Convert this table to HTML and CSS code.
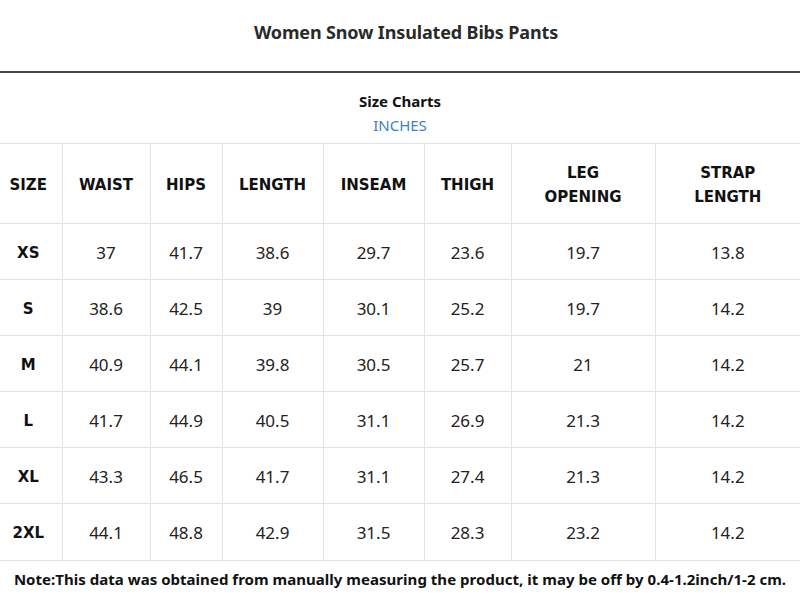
FILE: index.html
```html
<!DOCTYPE html>
<html>
<head>
<meta charset="utf-8">
<link rel="stylesheet" href="styles.css">
</head>
<body>
<header class="top">
  <h1 class="title">Women Snow Insulated Bibs Pants</h1>
</header>
<section class="chart">
  <div class="chart-head">
    <div class="chart-name">Size Charts</div>
    <div class="chart-unit">INCHES</div>
  </div>
  <table class="sizes">
    <colgroup>
      <col class="c1"><col class="c2"><col class="c3"><col class="c4"><col class="c5"><col class="c6"><col class="c7"><col class="c8">
    </colgroup>
    <thead>
      <tr><th>SIZE</th><th>WAIST</th><th>HIPS</th><th>LENGTH</th><th>INSEAM</th><th>THIGH</th><th>LEG<br>OPENING</th><th>STRAP<br>LENGTH</th></tr>
    </thead>
    <tbody>
      <tr><th>XS</th><td>37</td><td>41.7</td><td>38.6</td><td>29.7</td><td>23.6</td><td>19.7</td><td>13.8</td></tr>
      <tr><th>S</th><td>38.6</td><td>42.5</td><td>39</td><td>30.1</td><td>25.2</td><td>19.7</td><td>14.2</td></tr>
      <tr><th>M</th><td>40.9</td><td>44.1</td><td>39.8</td><td>30.5</td><td>25.7</td><td>21</td><td>14.2</td></tr>
      <tr><th>L</th><td>41.7</td><td>44.9</td><td>40.5</td><td>31.1</td><td>26.9</td><td>21.3</td><td>14.2</td></tr>
      <tr><th>XL</th><td>43.3</td><td>46.5</td><td>41.7</td><td>31.1</td><td>27.4</td><td>21.3</td><td>14.2</td></tr>
      <tr class="last"><th>2XL</th><td>44.1</td><td>48.8</td><td>42.9</td><td>31.5</td><td>28.3</td><td>23.2</td><td>14.2</td></tr>
    </tbody>
  </table>
  <p class="note">Note:This data was obtained from manually measuring the product, it may be off by 0.4-1.2inch/1-2 cm.</p>
</section>
</body>
</html>
```

FILE: styles.css
```css
html, body {
  margin: 0;
  padding: 0;
  background: #fff;
}
body {
  width: 800px;
  height: 600px;
  overflow: hidden;
  font-family: "Noto Sans", "Open Sans", sans-serif;
  color: #111;
}
.top {
  height: 71px;
  border-bottom: 2px solid #444;
  display: flex;
  align-items: center;
  justify-content: center;
}
.title {
  margin: 0 0 8px 12px;
  font-size: 18px;
  font-weight: 700;
  color: #2a2a2a;
  letter-spacing: -0.15px;
}
.chart-head {
  height: 70px;
  display: flex;
  flex-direction: column;
  align-items: center;
  padding-top: 18px;
  box-sizing: border-box;
}
.chart-name {
  font-size: 15px;
  font-weight: 700;
  line-height: 20px;
  color: #111;
}
.chart-unit {
  font-size: 15px;
  line-height: 20px;
  margin-top: 4px;
  color: #3f7fbf;
}
.sizes {
  width: 800px;
  table-layout: fixed;
  border-collapse: collapse;
}
.c1 { width: 62px; }
.c2 { width: 88px; }
.c3 { width: 72px; }
.c4 { width: 101px; }
.c5 { width: 101px; }
.c6 { width: 87px; }
.c7 { width: 144px; }
.c8 { width: 145px; }
.sizes th, .sizes td {
  border: 1px solid #e4e4e4;
  padding: 0;
  text-align: center;
  vertical-align: middle;
}
.sizes tr > :first-child { border-left: none; padding-right: 5px; }
.sizes tr > :last-child { border-right: none; }
.sizes th {
  font-family: "DejaVu Sans", Verdana, sans-serif;
  font-weight: 700;
  font-size: 15px;
  line-height: 24px;
  color: #111;
}
.sizes thead th { padding-top: 3px; }
.sizes tbody th { padding-top: 2px; }
.sizes thead tr { height: 80px; }
.sizes tbody tr { height: 56px; }
.sizes tbody tr.last { height: 57px; }
.sizes td {
  font-size: 17px;
  color: #222;
  padding-top: 1px;
}
.note {
  margin: 8px 0 0;
  text-align: center;
  font-size: 15px;
  font-weight: 700;
  color: #111;
  letter-spacing: 0.03px;
}
```
